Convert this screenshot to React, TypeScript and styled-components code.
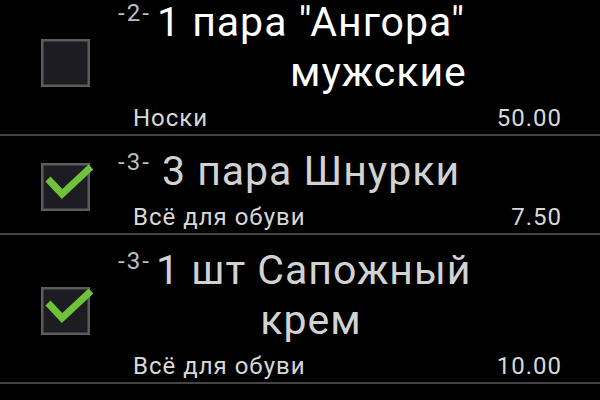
import React from 'react';
import styled, { createGlobalStyle } from 'styled-components';

interface Purchase {
  id: number;
  count: number;
  lines: string[];
  shift?: number[];
  category: string;
  price: string;
  done: boolean;
}

const purchases: Purchase[] = [
  {
    id: 1,
    count: 2,
    lines: ['1 пара "Ангора"', 'мужские'],
    shift: [0, 134],
    category: 'Носки',
    price: '50.00',
    done: false,
  },
  {
    id: 2,
    count: 3,
    lines: ['3 пара Шнурки'],
    category: 'Всё для обуви',
    price: '7.50',
    done: true,
  },
  {
    id: 3,
    count: 3,
    lines: ['1 шт Сапожный', 'крем'],
    category: 'Всё для обуви',
    price: '10.00',
    done: true,
  },
];

const GlobalStyle = createGlobalStyle`
  html, body {
    margin: 0;
    padding: 0;
    background: #000;
    overflow: hidden;
  }
  body {
    font-family: Roboto, "Noto Sans", "DejaVu Sans", sans-serif;
  }
`;

const Screen = styled.div`
  width: 600px;
  height: 400px;
  background: #000;
  overflow: hidden;
`;

const List = styled.ul`
  list-style: none;
  margin: -13px 0 0 0;
  padding: 0;
`;

const Row = styled.li`
  display: flex;
  align-items: center;
  padding: 10px 38px 3px 41px;
  border-bottom: 2px solid #444;
`;

const CheckBox = styled.svg`
  flex: 0 0 56px;
  width: 56px;
  height: 50px;
  overflow: visible;
`;

const Body = styled.div`
  flex: 1;
  display: flex;
  flex-direction: column;
  margin-left: 21px;
`;

const TitleRow = styled.div`
  display: flex;
  align-items: flex-start;
`;

const Counter = styled.span`
  flex: 0 0 38px;
  font-size: 24px;
  line-height: 24px;
  letter-spacing: 2px;
  margin-top: 4px;
  color: #bdbdbd;
  white-space: nowrap;
`;

const Title = styled.div<{ $done: boolean }>`
  width: 310px;
  text-align: center;
  font-size: 41px;
  line-height: 50px;
  letter-spacing: 1px;
  color: ${(p) => (p.$done ? '#d2d2d2' : '#ffffff')};
  white-space: nowrap;
`;

const TitleLine = styled.div<{ $shift: number }>`
  padding-left: ${(p) => p.$shift}px;
`;

const InfoRow = styled.div`
  display: flex;
  justify-content: space-between;
  margin-top: 8px;
  padding-left: 15px;
  font-size: 24px;
  line-height: 26px;
  letter-spacing: 1px;
  color: #d8d8d8;
`;

const Check: React.FC<{ on: boolean }> = ({ on }) => (
  <CheckBox viewBox="0 0 56 50">
    <rect
      x="1.25"
      y="1.25"
      width="46.5"
      height="45.5"
      fill="#1c1c22"
      stroke="#5c5c5c"
      strokeWidth="2.5"
    />
    {on && (
      <polyline
        points="7,16 21,31 50,4"
        fill="none"
        stroke="#6ec33a"
        strokeWidth="7"
        strokeLinejoin="miter"
      />
    )}
  </CheckBox>
);

const App: React.FC = () => (
  <Screen>
    <GlobalStyle />
    <List>
      {purchases.map((item) => (
        <Row key={item.id}>
          <Check on={item.done} />
          <Body>
            <TitleRow>
              <Counter>-{item.count}-</Counter>
              <Title $done={item.done}>
                {item.lines.map((line, i) => (
                  <TitleLine key={i} $shift={item.shift ? item.shift[i] : 0}>
                    {line}
                  </TitleLine>
                ))}
              </Title>
            </TitleRow>
            <InfoRow>
              <span>{item.category}</span>
              <span>{item.price}</span>
            </InfoRow>
          </Body>
        </Row>
      ))}
    </List>
  </Screen>
);

export default App;
